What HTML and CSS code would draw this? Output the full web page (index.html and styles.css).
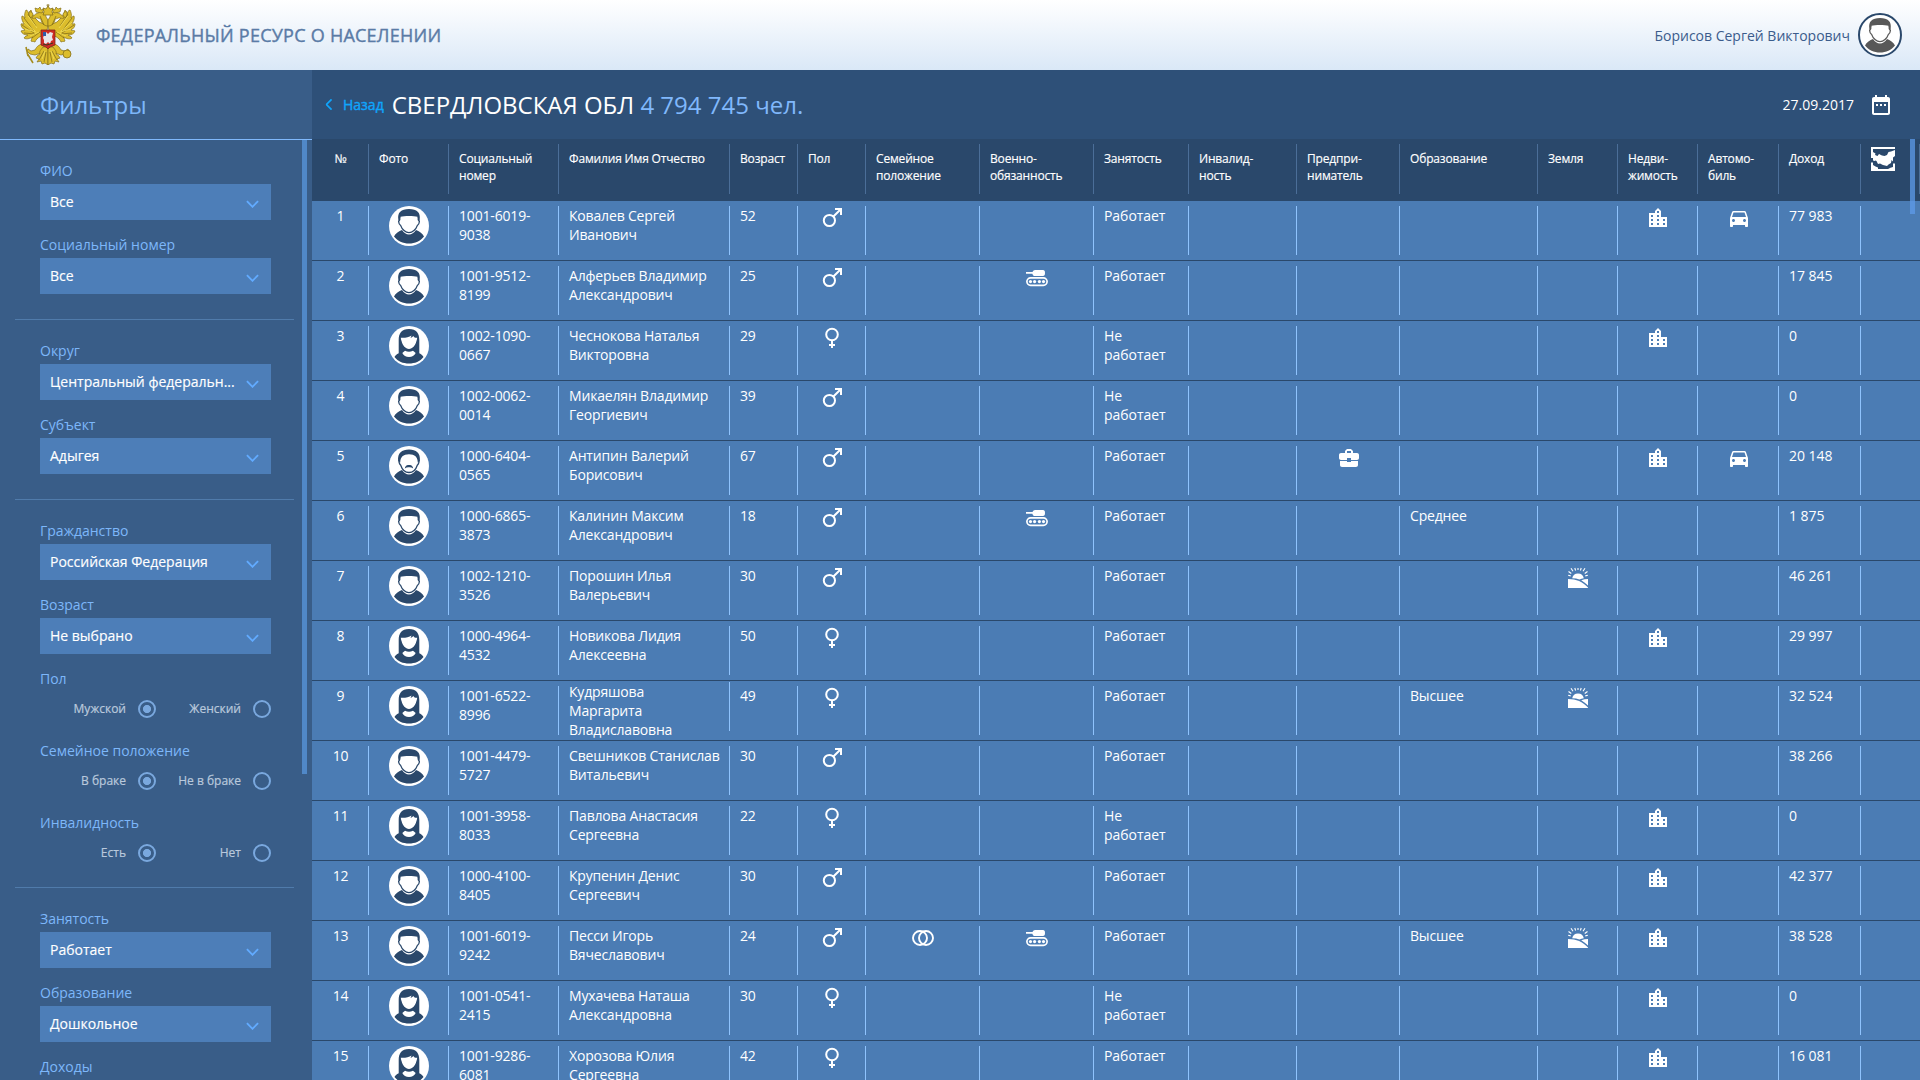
FILE: index.html
```html
<!DOCTYPE html>
<html lang="ru">
<head>
<meta charset="utf-8">
<title>Федеральный ресурс о населении</title>
<link rel="stylesheet" href="styles.css">
</head>
<body>
<svg class="sprite" aria-hidden="true">
  <symbol id="man" viewBox="0 0 40 40">
    <path d="M9.3 13.5C8.3 6.5 12 3 20 3s11.700 3.500 10.700 10.500L30 15l-1.500-4.200C25 9.600 15 9.600 11.500 10.800L10 15z"/>
    <path d="M10.800 10.500c.4 2.500-.2 4-1.200 5 .2 2 .9 3.300 2 3.900C13 23.500 16.500 26.700 20 26.700s7-3.200 8.400-7.300c1.100-.6 1.800-1.900 2-3.900-1-1-1.600-2.500-1.200-5" fill="none" stroke="currentColor" stroke-width="1.300"/>
    <path d="M5 30.500c1.500-3.500 5-5.300 8-6.500 2 2.800 4.200 4.500 7 4.500s5-1.700 7-4.500c3 1.200 6.500 3 8 6.500C31.500 35 26 37.500 20 37.500S8.500 35 5 30.500z"/>
  </symbol>
  <symbol id="woman" viewBox="0 0 40 40">
    <path d="M20 3c7.500 0 10.300 4.500 10.300 11v13.200c2 .8 3.700 2.300 4.200 3.800C31 35.500 26 37.500 20 37.500S9 35.500 5.500 31c.5-1.500 2.200-3 4.200-3.800V14C9.700 7.500 12.500 3 20 3z"/>
    <path d="M11.800 11.800c4.200.2 8.200-.3 10.700-2.300-.2 1-.6 1.800-1 2.400 1.500-.5 2.300-1.100 2.800-1.900.8 1.400 1.900 1.900 3.900 1.800-.2 1.500-.4 2.600-.9 3.800-.9 4-3.800 7.400-7.300 7.400s-6.400-3.400-7.300-7.400c-.5-1.200-.8-2.300-.9-3.800z" fill="#fff"/>
    <path d="M16 24.800c2.700 1.300 5.300 1.300 8 0l2.700 2.200C25.400 29.600 23 31 20 31s-5.400-1.400-6.700-4z" fill="#fff"/>
  </symbol>
  <symbol id="elder" viewBox="0 0 40 40">
    <path d="M9.200 15C8.200 7 13 3.500 20 3.500S31.800 7 30.800 15l-2 1.500C28.500 11 26 8.300 20 8.300S11.500 11 11.200 16.500z"/>
    <path d="M10.500 13c-1 1.500-.6 4.500 1.200 6.200 1.400 4.300 4.800 7.300 8.300 7.300s6.900-3 8.300-7.300c1.800-1.700 2.200-4.700 1.200-6.200" fill="none" stroke="currentColor" stroke-width="1.300"/>
    <path d="M15.800 22.500c.5-2.800 2-4 4.200-3.500 2.200-.5 3.700.7 4.200 3.500-1.400-1-2.800-1.400-4.200-1.200-1.400-.2-2.800.2-4.200 1.200z"/>
    <path d="M5 30.500c1.500-3.500 5-5.300 8-6.500 2 2.800 4.200 4.500 7 4.500s5-1.700 7-4.500c3 1.200 6.500 3 8 6.500C31.500 35 26 37.500 20 37.500S8.500 35 5 30.500z"/>
  </symbol>
  <symbol id="male" viewBox="0 0 24 24">
    <g fill="none" stroke="currentColor" stroke-width="2"><circle cx="9.400" cy="14.500" r="5.600"/><path d="M13.400 10.500L21 3M15 3h6v6"/></g>
  </symbol>
  <symbol id="female" viewBox="0 0 24 24">
    <g fill="none" stroke="currentColor" stroke-width="2"><circle cx="12" cy="8.500" r="5.800"/><path d="M12 14.500V22M9 19h6"/></g>
  </symbol>
  <symbol id="tank" viewBox="0 0 24 24">
    <path d="M1 6h6.500c.6-1.300 1.400-2 2.500-2h8c1.300 0 2 .8 2 3s-.7 3-2 3h-8c-1.400 0-2.300-.8-2.600-2.300H1z"/>
    <rect x="1.900" y="11.900" width="20.200" height="7.400" rx="3.700" fill="none" stroke="currentColor" stroke-width="1.700"/>
    <circle cx="5.500" cy="15.600" r="1.600"/><circle cx="9.600" cy="15.600" r="1.600"/><circle cx="14.400" cy="15.600" r="1.600"/><circle cx="18.500" cy="15.600" r="1.600"/>
  </symbol>
  <symbol id="rings" viewBox="0 0 24 24">
    <g fill="none" stroke="currentColor" stroke-width="1.900"><circle cx="9" cy="12" r="7"/><circle cx="15" cy="12" r="7"/></g>
  </symbol>
  <symbol id="work" viewBox="0 0 24 24">
    <path d="M10 16v-1H3.010L3 19c0 1.110.89 2 2 2h14c1.110 0 2-.89 2-2v-4h-7v1h-4zm10-9h-4.010V5l-2-2h-4l-2 2v2H4c-1.100 0-2 .9-2 2v3c0 1.110.89 2 2 2h6v-2h4v2h6c1.100 0 2-.9 2-2V9c0-1.100-.9-2-2-2zm-6 0h-4V5h4v2z"/>
  </symbol>
  <symbol id="land" viewBox="0 0 24 24">
    <path d="M6.200 12.300a5.900 5.900 0 0 1 11.600 0c-1.600.3-3 .7-4.300 1.200-2.200-.8-4.600-1.200-7.300-1.200z"/>
    <path d="M2 13c8.500 0 14.500 2.800 20 8.500v.5H2zM15.200 14.200c2.200-.8 4.400-1.200 6.800-1.200v6.600c-2.100-2.200-4.300-4-6.800-5.400z"/>
    <path d="M2.200 9.200l2.500.7M2.500 5.500l2.800 2M5 2.200l2 3M8.800 2l.8 2.500M12 2v2M15.200 2l-.8 2.500M19 2.200l-2 3M21.500 5.500l-2.800 2M21.800 9.200l-2.500.7" fill="none" stroke="currentColor" stroke-width="1.100"/>
  </symbol>
  <symbol id="city" viewBox="0 0 24 24">
    <path d="M15 11V5l-3-3-3 3v2H3v14h18V11h-6zm-8 8H5v-2h2v2zm0-4H5v-2h2v2zm0-4H5V9h2v2zm6 8h-2v-2h2v2zm0-4h-2v-2h2v2zm0-4h-2V9h2v2zm0-4h-2V5h2v2zm6 12h-2v-2h2v2zm0-4h-2v-2h2v2z"/>
  </symbol>
  <symbol id="car" viewBox="0 0 24 24">
    <path d="M18.920 6.010C18.720 5.420 18.160 5 17.500 5h-11c-.66 0-1.210.42-1.420 1.010L3 12v8c0 .55.45 1 1 1h1c.55 0 1-.45 1-1v-1h12v1c0 .55.45 1 1 1h1c.55 0 1-.45 1-1v-8l-2.080-5.990zM6.500 16c-.83 0-1.500-.67-1.500-1.500S5.670 13 6.500 13s1.500.67 1.500 1.500S7.330 16 6.500 16zm11 0c-.83 0-1.500-.67-1.500-1.500s.67-1.500 1.500-1.500 1.500.67 1.500 1.500-.67 1.500-1.500 1.500zM5 11l1.500-4.500h11L19 11H5z"/>
  </symbol>
  <symbol id="map" viewBox="0 0 24 24">
    <path d="M0 0h24v2H2v3l2.500 1.500L4 8l2 1-1.500 2L4 14l-2-.5V11H0z"/>
    <path d="M3.500 8.500l3 .5 1.500-2 3 1.500L13.500 9 16 8l1.500-3L20 4.500l4-1.500v6l-2 1.500v4L20.500 13l-.5 3-2.500 1.500L16 19l-4-1-3-1.500-2 .5-1.500-3-2.500-1z"/>
    <path d="M0 15.500h2V18l2.500 1.500L7 20.500V22h10l2.500-1.200L22 20v-3.500h2V24H0z"/>
  </symbol>
  <symbol id="calendar" viewBox="0 0 24 24">
    <path d="M9 11H7v2h2v-2zm4 0h-2v2h2v-2zm4 0h-2v2h2v-2zm2-7h-1V2h-2v2H8V2H6v2H5c-1.110 0-1.990.9-1.990 2L3 20c0 1.100.89 2 2 2h14c1.100 0 2-.9 2-2V6c0-1.100-.9-2-2-2zm0 16H5V9h14v11z"/>
  </symbol>
  <symbol id="chevron" viewBox="0 0 14 8">
    <path d="M1 1l6 6 6-6" fill="none" stroke="currentColor" stroke-width="2"/>
  </symbol>
  <symbol id="eagle-half" viewBox="0 0 28 60" overflow="visible">
    <g fill="#dcbd2c" stroke="#85701a" stroke-width=".7">
      <path d="M26 30C22 32 17 33 15 38c-2-1-3 0-4-1 1-2 0-3 2-4-3 1-6 3-9 1 1-2 3-2 4-3-3 0-6-1-7-4 2-1 3 0 4-1-2-1-4-3-4-6 1-1 3 1 3 0-1-2-3-5-2-8 2 0 2 2 3 2-1-3 0-6 1-8 2 0 2 3 3 4 0-2 1-3 2-4 1 3 2 6 4 8l4 4 9 4z"/>
      <path d="M28 22c-4 0-7-3-7-7-2 0-4-2-5-1-2 0-3 1-4 0 1-2 3-4 6-5 4-2 8 0 8 4l2 3z"/>
      <path d="M16 8l-1-4 3 1 2-2 1 3 3-1-2 4z"/>
      <path d="M9 8c2-1 4 1 4 3l-2 3-2-2z"/>
      <path d="M22 40c-3 1-5 2-7 6l-4 1-3-2-1 2 3 3 5 1 6-2 5-4z"/>
      <path d="M28 43h-5c-2 3-4 4-3 7-3 1-3 3-4 4l3 1-2 3 4-1 1 3 3-1 3 2z"/>
    </g>
    <path d="M4 14l10 13M2 21l12 8M4 29l11 1M8 10l8 12M12 34l8-6M20 12l4 9M19 56l5-9M24 58l2-10" fill="none" stroke="#85701a" stroke-width=".8"/>
    <path d="M8 12l9 12M4 18l11 9M5 25l11 3M10 32l9-4M22 55l3-8" fill="none" stroke="#f3e05a" stroke-width=".8"/>
  </symbol>
</svg>

<header class="topbar">
  <svg class="emblem" viewBox="0 0 56 61">
    <use href="#eagle-half" width="28" height="60"/>
    <g transform="matrix(-1 0 0 1 56 0)"><use href="#eagle-half" width="28" height="60"/></g>
    <path d="M7 49l6 10M6 43l2 9" stroke="#a58c1e" stroke-width="1.600" fill="none"/>
    <circle cx="47" cy="50" r="4" fill="#dcbd2c" stroke="#85701a" stroke-width=".8"/>
    <path d="M24 8l-1-4 3 1 2-3 2 3 3-1-1 4 1 3h-10zM28 0v3M26.500 1.200h3" fill="#dcbd2c" stroke="#85701a" stroke-width=".8"/>
    <path d="M21 26h14v15l-5 2-2 2-2-2-5-2z" fill="#cf2b24" stroke="#7d2a17" stroke-width=".8"/>
    <path d="M24 31l2-3 2 2 2-2 3 1-1 4 1 3-2 1-1 3-2-2-2 2-2-1v-3l-1-2z" fill="#e6e6ea"/>
    <path d="M23 28h3v4h-3z" fill="#2f5da8"/>
    <path d="M23 40l4 1 6-2" stroke="#3a3a22" fill="none"/>
  </svg>
  <h1 class="brand">ФЕДЕРАЛЬНЫЙ РЕСУРС О НАСЕЛЕНИИ</h1>
  <span class="user-name">Борисов Сергей Викторович</span>
  <svg class="user-photo"><use href="#man"/></svg>
</header>

<div class="layout">
  <aside class="filters">
    <h2 class="filters-title">Фильтры</h2>
    <div class="filters-body">
      <section class="group">
        <div class="field"><label>ФИО</label><div class="select"><span>Все</span><svg><use href="#chevron"/></svg></div></div>
        <div class="field"><label>Социальный номер</label><div class="select"><span>Все</span><svg><use href="#chevron"/></svg></div></div>
      </section>
      <section class="group">
        <div class="field"><label>Округ</label><div class="select"><span>Центральный федеральн...</span><svg><use href="#chevron"/></svg></div></div>
        <div class="field"><label>Субъект</label><div class="select"><span>Адыгея</span><svg><use href="#chevron"/></svg></div></div>
      </section>
      <section class="group">
        <div class="field"><label>Гражданство</label><div class="select"><span>Российская Федерация</span><svg><use href="#chevron"/></svg></div></div>
        <div class="field"><label>Возраст</label><div class="select"><span>Не выбрано</span><svg><use href="#chevron"/></svg></div></div>
        <div class="field choice"><label>Пол</label><div class="radios"><span class="radio on">Мужской</span><span class="radio">Женский</span></div></div>
        <div class="field choice"><label>Семейное положение</label><div class="radios"><span class="radio on">В браке</span><span class="radio">Не в браке</span></div></div>
        <div class="field choice"><label>Инвалидность</label><div class="radios"><span class="radio on">Есть</span><span class="radio">Нет</span></div></div>
      </section>
      <section class="group">
        <div class="field"><label>Занятость</label><div class="select"><span>Работает</span><svg><use href="#chevron"/></svg></div></div>
        <div class="field"><label>Образование</label><div class="select"><span>Дошкольное</span><svg><use href="#chevron"/></svg></div></div>
        <div class="field"><label>Доходы</label></div>
      </section>
      <div class="thumb filters-thumb"></div>
    </div>
  </aside>

  <main class="content">
    <div class="heading">
      <a class="back"><svg><use href="#chevron"/></svg>Назад</a>
      <h2 class="region">СВЕРДЛОВСКАЯ ОБЛ <span>4 794 745 чел.</span></h2>
      <span class="date">27.09.2017</span>
      <svg class="icon"><use href="#calendar"/></svg>
    </div>
    <div class="table">
      <div class="row head">
        <div class="num">№</div><div>Фото</div><div>Социальный<br>номер</div><div>Фамилия Имя Отчество</div><div>Возраст</div><div>Пол</div><div>Семейное<br>положение</div><div>Военно-<br>обязанность</div><div>Занятость</div><div>Инвалид-<br>ность</div><div>Предпри-<br>ниматель</div><div>Образование</div><div>Земля</div><div>Недви-<br>жимость</div><div>Автомо-<br>биль</div><div>Доход</div><div><svg class="icon"><use href="#map"/></svg></div>
      </div>
      <div id="rows"></div>
      <div class="thumb table-thumb"></div>
    </div>
  </main>
</div>
<script src="rows.js"></script>
</body>
</html>
```
FILE: rows.js
```js
// photo, number, name, age, sex, employment, income, then the optional marks
const people = [
  ['man', '1001-6019-9038', 'Ковалев Сергей Иванович', 52, 'male', 'Работает', '77 983', { city: 1, car: 1 }],
  ['man', '1001-9512-8199', 'Алферьев Владимир Александрович', 25, 'male', 'Работает', '17 845', { tank: 1 }],
  ['woman', '1002-1090-0667', 'Чеснокова Наталья Викторовна', 29, 'female', 'Не работает', '0', { city: 1 }],
  ['man', '1002-0062-0014', 'Микаелян Владимир Георгиевич', 39, 'male', 'Не работает', '0', {}],
  ['elder', '1000-6404-0565', 'Антипин Валерий Борисович', 67, 'male', 'Работает', '20 148', { work: 1, city: 1, car: 1 }],
  ['man', '1000-6865-3873', 'Калинин Максим Александрович', 18, 'male', 'Работает', '1 875', { tank: 1, edu: 'Среднее' }],
  ['man', '1002-1210-3526', 'Порошин Илья Валерьевич', 30, 'male', 'Работает', '46 261', { land: 1 }],
  ['woman', '1000-4964-4532', 'Новикова Лидия Алексеевна', 50, 'female', 'Работает', '29 997', { city: 1 }],
  ['woman', '1001-6522-8996', 'Кудряшова Маргарита Владиславовна', 49, 'female', 'Работает', '32 524', { edu: 'Высшее', land: 1, tall: 1 }],
  ['man', '1001-4479-5727', 'Свешников Станислав Витальевич', 30, 'male', 'Работает', '38 266', {}],
  ['woman', '1001-3958-8033', 'Павлова Анастасия Сергеевна', 22, 'female', 'Не работает', '0', { city: 1 }],
  ['man', '1000-4100-8405', 'Крупенин Денис Сергеевич', 30, 'male', 'Работает', '42 377', { city: 1 }],
  ['man', '1001-6019-9242', 'Песси Игорь Вячеславович', 24, 'male', 'Работает', '38 528', { rings: 1, tank: 1, edu: 'Высшее', land: 1, city: 1 }],
  ['woman', '1001-0541-2415', 'Мухачева Наташа Александровна', 30, 'female', 'Не работает', '0', { city: 1 }],
  ['woman', '1001-9286-6081', 'Хорозова Юлия Сергеевна', 42, 'female', 'Работает', '16 081', { city: 1 }]
];

const text = (value, cls = '') => `<div class="${cls}">${value}</div>`;
const icon = (id, shown) => `<div class="mark">${shown ? `<svg class="icon"><use href="#${id}"/></svg>` : ''}</div>`;

document.getElementById('rows').innerHTML = people.map(([photo, number, name, age, sex, job, income, m], i) =>
  '<div class="row">' + [
    text(i + 1, 'num'),
    `<div class="mark"><svg class="photo"><use href="#${photo}"/></svg></div>`,
    text(number.replace(/-(\d+)$/, '-<br>$1')),
    text(name, m.tall ? 'tall' : ''),
    text(age),
    icon(sex, true),
    icon('rings', m.rings),
    icon('tank', m.tank),
    text(job, 'job'),
    text(''),
    icon('work', m.work),
    text(m.edu || ''),
    icon('land', m.land),
    icon('city', m.city),
    icon('car', m.car),
    text(income, 'income'),
    text('')
  ].join('') + '</div>'
).join('');
```
FILE: styles.css
```css
*, *::after { box-sizing: border-box; }

body {
  margin: 0;
  height: 1080px;
  overflow: hidden;
  display: flex;
  flex-direction: column;
  font-family: "Open Sans", "Noto Sans", sans-serif;
  font-size: 14px;
  color: #fff;
}

h1, h2 { margin: 0; font-weight: 400; }
svg { display: block; flex: none; fill: currentColor; }
.sprite { position: absolute; width: 0; height: 0; }
.icon { width: 24px; height: 24px; }

.topbar {
  flex: none;
  height: 70px;
  display: flex;
  align-items: center;
  padding: 0 18px 0 20px;
  background: linear-gradient(#fff, #dae8f7);
}
.emblem { width: 56px; height: 61px; margin-top: -2px; }
.brand {
  margin-left: 20px;
  font-size: 18px;
  letter-spacing: .25px;
  color: #5a7ba6;
  -webkit-text-stroke: .4px #5a7ba6;
}
.user-name { margin-left: auto; color: #3b5c8c; }
.user-photo {
  width: 44px;
  height: 44px;
  margin-left: 8px;
  border: 2px solid #2a486b;
  border-radius: 50%;
  background: #fff;
  color: #585858;
}

.layout { flex: 1; min-height: 0; display: flex; }

.filters {
  width: 312px;
  flex: none;
  display: flex;
  flex-direction: column;
  background: #395d88;
  color: #7db7fa;
}
.filters-title {
  flex: none;
  height: 70px;
  padding-left: 40px;
  border-bottom: 1px solid #7fb8fb;
  font-size: 24px;
  line-height: 70px;
}
.filters-body { flex: 1; min-height: 0; overflow: hidden; position: relative; }
.group {
  margin: 0 18px 0 15px;
  padding: 21px 23px 25px 25px;
  border-bottom: 1px solid #507bab;
  display: flex;
  flex-direction: column;
  gap: 15px;
}
.field label { display: block; height: 20px; line-height: 20px; }
.choice + .choice { margin-top: 8px; }
.select {
  height: 36px;
  margin-top: 3px;
  padding: 0 12px 2px 10px;
  display: flex;
  align-items: center;
  justify-content: space-between;
  background: #4d7eb8;
  color: #fff;
  -webkit-text-stroke: .15px #fff;
}
.select span { white-space: nowrap; }
.select svg { width: 13px; height: 8px; margin-top: 5px; color: #62abff; }
.radios { display: grid; grid-template-columns: 116px 115px; margin-top: 11px; }
.radio {
  height: 18px;
  display: flex;
  justify-content: flex-end;
  align-items: center;
  gap: 12px;
  font-size: 12px;
  line-height: 16px;
  color: #b9c9dc;
  -webkit-text-stroke: .2px #b9c9dc;
}
.radio::after {
  content: "";
  width: 18px;
  height: 18px;
  border: 2px solid #7aa8de;
  border-radius: 50%;
}
.radio.on::after { background: radial-gradient(circle, #7aa8de 3.7px, transparent 4.4px); }

.thumb { position: absolute; width: 5px; background: #5088c8; }
.filters-thumb { left: 302px; top: 0; height: 634px; }

.content { flex: 1; min-width: 0; display: flex; flex-direction: column; }
.heading {
  flex: none;
  height: 69px;
  padding: 0 27px 0 11px;
  display: flex;
  align-items: center;
  background: #2e5078;
}
.back {
  display: flex;
  align-items: center;
  color: #0fa5fc;
  -webkit-text-stroke: .4px #0fa5fc;
}
.back svg { width: 12px; height: 7px; margin-right: 8px; transform: rotate(90deg); }
.region { margin-left: 8px; font-size: 24px; }
.region span { color: #80b8fc; }
.date { margin-left: auto; margin-right: 15px; }

.table { position: relative; flex: 1; min-height: 0; overflow: hidden; background: #4b7cb4; }
.table-thumb { right: 5px; top: 0; height: 75px; background: rgba(93, 155, 233, .75); }
.row {
  height: 60px;
  display: grid;
  grid-template-columns: 57px 80px 110px 171px 68px 68px 114px 114px 95px 108px 103px 138px 80px 80px 81px 82px 59px;
  align-items: start;
  border-bottom: 1px solid #2a486b;
  line-height: 19px;
  letter-spacing: -.17px;
}
.row > div {
  height: 49px;
  margin-top: 5px;
  padding: 0 0 0 10px;
  box-shadow: inset -1px 0 #8fc3fd;
}
.row > div:last-child { box-shadow: none; }
.row > .num, .row > .mark { padding: 0; text-align: center; }
.row > .mark { display: flex; justify-content: center; }
.row > .job { padding-right: 12px; letter-spacing: -.05px; }
.row > .income { letter-spacing: -.05px; }
.row > .tall { margin-top: 1px; padding-right: 40px; }
.photo {
  width: 40px;
  height: 40px;
  border-radius: 50%;
  background: #fff;
  color: #2a486b;
}

.row.head {
  height: 62px;
  border: 0;
  background: #2a486b;
  font-size: 12px;
  line-height: 17px;
  -webkit-text-stroke: .15px #fff;
}
.row.head > div {
  height: 50px;
  padding-top: 6px;
  box-shadow: inset -1px 0 #4b6e98;
}
.row.head > div:last-child { padding-top: 3px; }
```
